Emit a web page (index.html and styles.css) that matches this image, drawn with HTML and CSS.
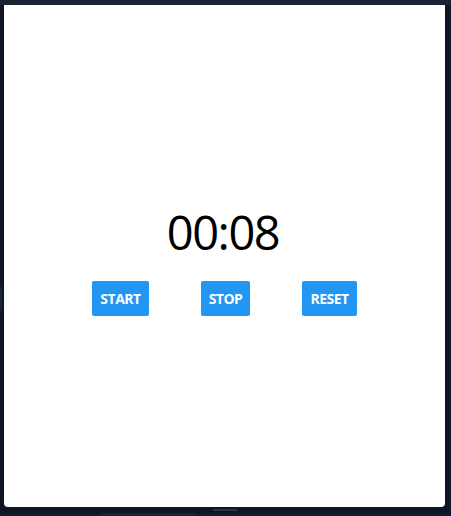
FILE: index.html
```html
<!DOCTYPE html>
<html>
<head>
<meta charset="utf-8">
<link rel="stylesheet" href="styles.css">
</head>
<body>
<div class="topbar"></div>
<div class="row">
  <div class="side"><div class="side-tab"></div></div>
  <main class="panel">
    <div class="timer">00:08</div>
    <div class="controls">
      <button class="btn">START</button>
      <button class="btn">STOP</button>
      <button class="btn">RESET</button>
    </div>
  </main>
</div>
<div class="bottom">
  <div class="handle"></div>
</div>
<div class="strip"><div class="strip-seg"></div></div>
</body>
</html>
```
FILE: styles.css
```css
html, body {
  margin: 0;
  padding: 0;
  width: 451px;
  height: 516px;
  overflow: hidden;
  background: #0f1526;
  font-family: "Open Sans", "Noto Sans", sans-serif;
}
.topbar {
  height: 5px;
  background: #1c2133;
}
.row {
  display: flex;
  height: 502px;
}
.side {
  width: 4px;
  display: flex;
  flex-direction: column;
  justify-content: flex-start;
}
.side-tab {
  margin-top: 282px;
  width: 2px;
  height: 24px;
  background: #1e2438;
}
.panel {
  width: 441px;
  background: #ffffff;
  border-radius: 0 0 4px 4px;
  display: flex;
  flex-direction: column;
  align-items: center;
  justify-content: center;
  padding-top: 12px;
  box-sizing: border-box;
}
.timer {
  font-size: 47px;
  line-height: 48px;
  letter-spacing: -1.5px;
  padding-right: 3px;
  color: #000;
}
.controls {
  display: flex;
  gap: 52px;
  margin-top: 25px;
}
.btn {
  background: #2196f3;
  color: #fff;
  border: none;
  border-radius: 2px;
  height: 35px;
  padding: 0 8px;
  font-family: "Open Sans", "Noto Sans", sans-serif;
  font-weight: 700;
  font-size: 14px;
  letter-spacing: -0.5px;
}
.bottom {
  height: 6px;
  display: flex;
  justify-content: center;
  align-items: center;
}
.handle {
  width: 24px;
  height: 2px;
  background: #2c3247;
  margin-left: -2px;
}
.strip {
  height: 3px;
  background: #121a2c;
}
.strip-seg {
  margin-left: 100px;
  width: 97px;
  height: 3px;
  background: #1a2236;
}
```
